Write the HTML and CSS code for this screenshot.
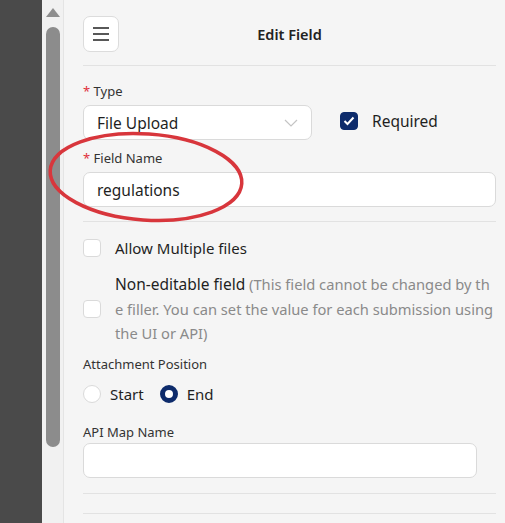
FILE: index.html
```html
<!DOCTYPE html>
<html lang="en">
<head>
  <meta charset="UTF-8">
  <meta name="viewport" content="width=device-width, initial-scale=1.0">
  <title>Edit Field</title>
  <link rel="stylesheet" href="styles.css">
</head>
<body>
  <div class="shade"></div>
  <div class="scrollbar">
    <div class="scroll-arrow"></div>
    <div class="scroll-thumb"></div>
  </div>
  <div class="panel">
    <div class="panel-header">
      <button class="menu-btn" aria-label="Menu">
        <svg width="18" height="16" viewBox="0 0 18 16">
          <path d="M1 2h16M1 8h16M1 14h16" stroke="#222" stroke-width="1.6" fill="none"/>
        </svg>
      </button>
      <h1 class="panel-title">Edit Field</h1>
    </div>

    <div class="form-group">
      <label class="field-label"><span class="req">*</span> Type</label>
      <div class="type-row">
        <div class="select">
          <span>File Upload</span>
          <svg width="14" height="8" viewBox="0 0 14 8">
            <path d="M1 1l6 6 6-6" stroke="#c4c4c4" stroke-width="1.2" fill="none"/>
          </svg>
        </div>
        <label class="check-row">
          <span class="checkbox checked">
            <svg width="12" height="10" viewBox="0 0 12 10">
              <path d="M1.5 5l3 3 6-6.5" stroke="#fff" stroke-width="2" fill="none"/>
            </svg>
          </span>
          Required
        </label>
      </div>
    </div>

    <div class="form-group">
      <label class="field-label"><span class="req">*</span> Field Name</label>
      <div class="input">regulations</div>
    </div>

    <hr class="divider">

    <label class="check-row option">
      <span class="checkbox"></span>
      Allow Multiple files
    </label>

    <label class="check-row option wrap">
      <span class="checkbox"></span>
      <p class="option-text"><span class="option-name">Non-editable field</span> <span class="hint">(This field cannot be changed by the filler. You can set the value for each submission using the UI or API)</span></p>
    </label>

    <div class="field-label plain">Attachment Position</div>
    <div class="radio-row">
      <label class="radio-item"><span class="radio"></span>Start</label>
      <label class="radio-item"><span class="radio on"></span>End</label>
    </div>

    <div class="field-label plain api">API Map Name</div>
    <div class="input short"></div>

    <hr class="divider last">
    <hr class="divider">
  </div>

  <svg class="mark" width="505" height="523" viewBox="0 0 505 523">
    <ellipse cx="146" cy="177" rx="96" ry="43" transform="rotate(4 146 177)" fill="none" stroke="#d8363c" stroke-width="3.5"/>
  </svg>
</body>
</html>
```

FILE: styles.css
```css
body {
  margin: 0;
  display: flex;
  height: 523px;
  overflow: hidden;
  font-family: 'Noto Sans', sans-serif;
  color: #1f1f1f;
  background-color: #f5f5f5;
}
.shade {
  width: 42px;
  background-color: #4a4a4a;
}
.scrollbar {
  width: 21px;
  background-color: #f1f1f1;
  border-right: 1px solid #e4e4e4;
  display: flex;
  flex-direction: column;
  align-items: center;
  padding-top: 8px;
}
.scroll-arrow {
  width: 0;
  height: 0;
  border-left: 7px solid transparent;
  border-right: 7px solid transparent;
  border-bottom: 9px solid #8e8e8e;
}
.scroll-thumb {
  margin-top: 10px;
  width: 14px;
  height: 420px;
  border-radius: 7px;
  background-color: #8c8c8c;
}
.panel {
  flex: 1;
  padding: 16px 9px 0 19px;
}
.panel-header {
  position: relative;
  display: flex;
  align-items: center;
  justify-content: center;
  height: 36px;
  padding-bottom: 13px;
  border-bottom: 1px solid #e2e2e2;
}
.menu-btn {
  position: absolute;
  left: 0;
  top: 0;
  width: 36px;
  height: 36px;
  display: flex;
  align-items: center;
  justify-content: center;
  background-color: #fff;
  border: 1px solid #dcdcdc;
  border-radius: 7px;
  padding: 0;
}
.panel-title {
  margin: 0;
  font-size: 14.5px;
  font-weight: 600;
  color: #222;
}
.form-group {
  margin-top: 16px;
}
.form-group + .form-group {
  margin-top: 9px;
}
.field-label {
  display: block;
  font-size: 13px;
  line-height: 18px;
  color: #333;
  margin-bottom: 5px;
}
.req {
  color: #e0303b;
}
.type-row {
  display: flex;
  align-items: center;
  gap: 28px;
}
.select {
  width: 229px;
  height: 35px;
  box-sizing: border-box;
  padding: 0 13px;
  display: flex;
  align-items: center;
  justify-content: space-between;
  background-color: #fff;
  border: 1px solid #dadada;
  border-radius: 7px;
  font-size: 15.5px;
}
.input {
  height: 35px;
  box-sizing: border-box;
  padding: 0 13px;
  display: flex;
  align-items: center;
  background-color: #fff;
  border: 1px solid #dadada;
  border-radius: 7px;
  font-size: 15.5px;
}
.input.short {
  width: 394px;
}
.check-row {
  display: flex;
  align-items: center;
  gap: 14px;
  font-size: 15px;
}
.type-row .check-row {
  font-size: 15.5px;
  padding-bottom: 3px;
}
.checkbox {
  flex: none;
  width: 18px;
  height: 18px;
  box-sizing: border-box;
  border: 1px solid #dadada;
  border-radius: 4px;
  background-color: #fff;
  display: flex;
  align-items: center;
  justify-content: center;
}
.checkbox.checked {
  background-color: #0d2b6b;
  border-color: #0d2b6b;
}
.divider {
  margin: 14px 0 0;
  border: none;
  border-top: 1px solid #e2e2e2;
}
.option {
  margin-top: 16px;
}
.option.wrap {
  margin-top: 14px;
}
.option-text {
  margin: 0;
  font-size: 14.7px;
  line-height: 24.6px;
  word-break: break-all;
}
.option-name {
  font-size: 15.5px;
}
.hint {
  color: #8a8a8a;
}
.field-label.plain {
  margin-top: 9px;
  margin-bottom: 0;
}
.radio-row {
  display: flex;
  gap: 16px;
  margin-top: 11px;
}
.radio-item {
  display: flex;
  align-items: center;
  gap: 9px;
  font-size: 15px;
}
.radio {
  width: 18px;
  height: 18px;
  box-sizing: border-box;
  border-radius: 50%;
  border: 1px solid #dadada;
  background-color: #fff;
}
.radio.on {
  border: 5px solid #0d2b6b;
}
.field-label.api {
  margin-top: 19px;
  margin-bottom: 2px;
}
.divider.last {
  margin-top: 15px;
}
.divider.last + .divider {
  margin-top: 19px;
}
.mark {
  position: absolute;
  left: 0;
  top: 0;
  pointer-events: none;
}
```
